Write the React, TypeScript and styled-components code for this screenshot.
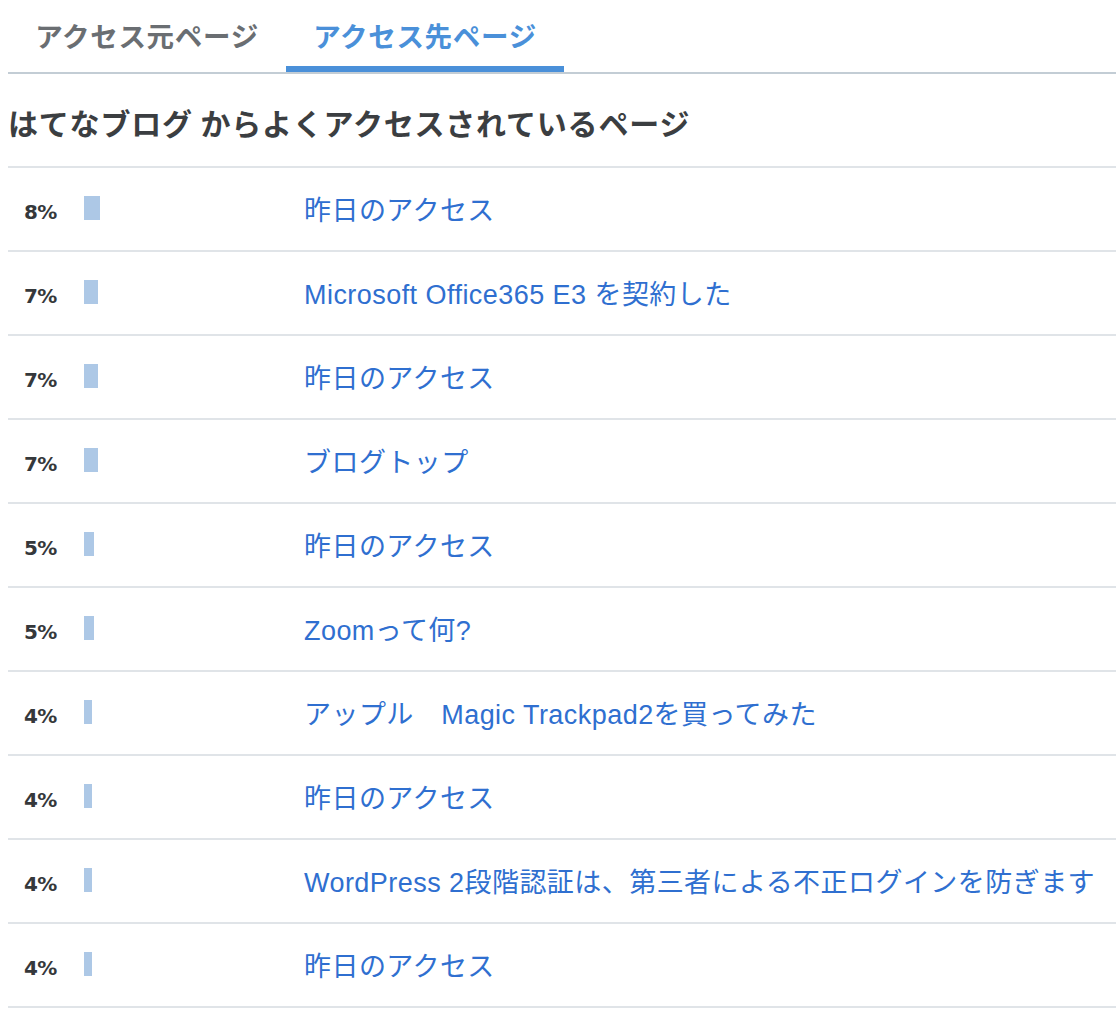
import React, { useState } from "react";
import styled, { createGlobalStyle } from "styled-components";

const GlobalStyle = createGlobalStyle`
  html, body { margin: 0; padding: 0; background: #ffffff; }
  body { font-family: "Liberation Sans", "Noto Sans CJK JP", sans-serif; overflow: hidden; }
`;

const Page = styled.div`
  padding-left: 8px;
  width: 1108px;
`;

const TabBar = styled.div`
  display: flex;
  border-bottom: 2px solid #c3cdd5;
`;

const Tab = styled.button<{ $active: boolean }>`
  width: 278px;
  height: 72px;
  margin: 0;
  padding: 9px 0 6px;
  border: none;
  background: transparent;
  border-bottom: 6px solid ${(p) => (p.$active ? "#4a90d9" : "transparent")};
  box-sizing: border-box;
  font-family: "Noto Sans CJK JP", sans-serif;
  font-weight: 700;
  font-size: 27.5px;
  letter-spacing: 0.7px;
  line-height: 40px;
  color: ${(p) => (p.$active ? "#4a90d9" : "#6a6e72")};
  text-align: center;
  cursor: pointer;
`;

const Heading = styled.h2`
  margin: 0;
  padding: 26px 0 21px;
  font-family: "Noto Sans CJK JP", sans-serif;
  font-weight: 700;
  font-size: 30px;
  letter-spacing: 0.8px;
  line-height: 45px;
  color: #3b3e41;
`;

const List = styled.div`
  border-top: 2px solid #e0e4e8;
`;

const Row = styled.div`
  display: flex;
  align-items: center;
  height: 82px;
  border-bottom: 2px solid #e0e4e8;
`;

const Percent = styled.div`
  width: 60px;
  padding-left: 16px;
  padding-top: 6px;
  font-family: "DejaVu Sans", sans-serif;
  font-weight: 700;
  font-size: 20px;
  letter-spacing: -0.6px;
  color: #35383b;
`;

const BarCell = styled.div`
  width: 220px;
  display: flex;
  align-items: center;
  margin-top: -2px;
`;

const Bar = styled.div`
  height: 24px;
  background: #adc8e6;
`;

const Link = styled.a`
  font-family: "Liberation Sans", "Noto Sans CJK JP", sans-serif;
  font-size: 27px;
  letter-spacing: 0.45px;
  color: #2f6fd0;
  text-decoration: none;
  white-space: nowrap;
  line-height: 40px;
  padding-top: 4px;
`;

const rows = [
  { pct: 8, title: "昨日のアクセス" },
  { pct: 7, title: "Microsoft Office365 E3 を契約した" },
  { pct: 7, title: "昨日のアクセス" },
  { pct: 7, title: "ブログトップ" },
  { pct: 5, title: "昨日のアクセス" },
  { pct: 5, title: "Zoomって何?" },
  { pct: 4, title: "アップル　Magic Trackpad2を買ってみた" },
  { pct: 4, title: "昨日のアクセス" },
  { pct: 4, title: "WordPress 2段階認証は、第三者による不正ログインを防ぎます" },
  { pct: 4, title: "昨日のアクセス" },
];

export default function App() {
  const [tab, setTab] = useState(1);
  return (
    <Page>
      <GlobalStyle />
      <TabBar>
        <Tab $active={tab === 0} onClick={() => setTab(0)}>
          アクセス元ページ
        </Tab>
        <Tab $active={tab === 1} onClick={() => setTab(1)}>
          アクセス先ページ
        </Tab>
      </TabBar>
      <Heading>はてなブログ からよくアクセスされているページ</Heading>
      <List>
        {rows.map((r, i) => (
          <Row key={i}>
            <Percent>{r.pct}%</Percent>
            <BarCell>
              <Bar style={{ width: r.pct * 2 }} />
            </BarCell>
            <Link href="#">{r.title}</Link>
          </Row>
        ))}
      </List>
    </Page>
  );
}
